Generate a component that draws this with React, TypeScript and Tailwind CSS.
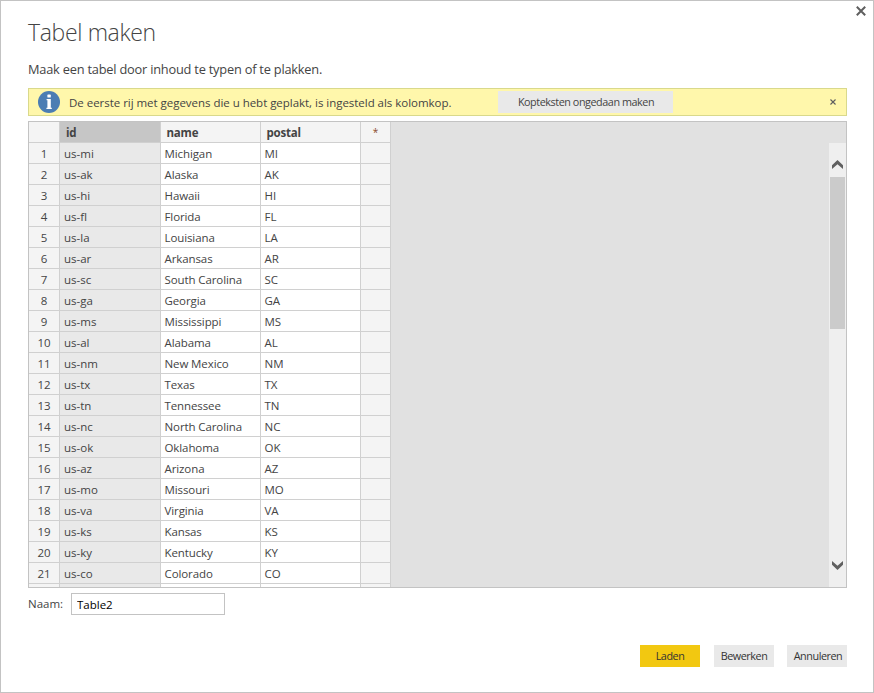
const rows: [string, string, string][] = [
  ['us-mi', 'Michigan', 'MI'],
  ['us-ak', 'Alaska', 'AK'],
  ['us-hi', 'Hawaii', 'HI'],
  ['us-fl', 'Florida', 'FL'],
  ['us-la', 'Louisiana', 'LA'],
  ['us-ar', 'Arkansas', 'AR'],
  ['us-sc', 'South Carolina', 'SC'],
  ['us-ga', 'Georgia', 'GA'],
  ['us-ms', 'Mississippi', 'MS'],
  ['us-al', 'Alabama', 'AL'],
  ['us-nm', 'New Mexico', 'NM'],
  ['us-tx', 'Texas', 'TX'],
  ['us-tn', 'Tennessee', 'TN'],
  ['us-nc', 'North Carolina', 'NC'],
  ['us-ok', 'Oklahoma', 'OK'],
  ['us-az', 'Arizona', 'AZ'],
  ['us-mo', 'Missouri', 'MO'],
  ['us-va', 'Virginia', 'VA'],
  ['us-ks', 'Kansas', 'KS'],
  ['us-ky', 'Kentucky', 'KY'],
  ['us-co', 'Colorado', 'CO'],
];

const gridRow = 'grid h-[21px] shrink-0 grid-cols-[31px_101px_100px_100px_30px] grid-rows-[21px] leading-[21px]';
const cell = 'h-[21px] border-r border-b border-[#d0d0d0] whitespace-nowrap';

function Cross({ size, width }: { size: number; width: number }) {
  return (
    <svg width={size} height={size} viewBox="0 0 10 10" className="block" fill="none" stroke="#5f5f5f" strokeWidth={width}>
      <path d="M.8.8 9.2 9.2M9.2.8.8 9.2" />
    </svg>
  );
}

function Chevron({ down = false }: { down?: boolean }) {
  return (
    <svg width="11" height="9" viewBox="0 0 11 9" className={down ? 'block rotate-180' : 'block'} fill="#606060">
      <path d="M5.5 0 11 5.3V9L5.5 4.2 0 9V5.3z" />
    </svg>
  );
}

function Banner() {
  return (
    <div className="flex h-7 items-center border border-[#d9d98c] bg-[#fff7ab] pl-[9px] text-[11.5px] text-[#444]">
      <svg width="22" height="22" viewBox="0 0 22 22" className="shrink-0">
        <circle cx="11" cy="11" r="11" fill="#4b7db3" />
        <rect x="9.4" y="3.6" width="3.4" height="3" rx=".6" fill="#fff" />
        <path d="M8.6 8.1h4.2v8.7h1V18H8.4v-1.2h1V9.3h-.8z" fill="#fff" />
      </svg>
      <span className="ml-[9px] w-[429px] pt-px whitespace-nowrap tracking-[-0.03px]">
        De eerste rij met gegevens die u hebt geplakt, is ingesteld als kolomkop.
      </span>
      <button className="h-[22px] w-[175px] bg-[#e9e9e9] pl-px text-center text-[10.8px] tracking-[-0.44px] whitespace-nowrap">
        Kopteksten ongedaan maken
      </button>
      <button className="mr-[10px] ml-auto" aria-label="Sluiten">
        <Cross size={6} width={1.9} />
      </button>
    </div>
  );
}

function DataGrid() {
  return (
    <div className="mt-[5px] flex h-[467px] overflow-hidden border border-[#c3c3c3] bg-[#e1e1e1] text-[11.5px] text-[#444]">
      <div className="flex w-[362px] shrink-0 flex-col overflow-hidden">
        <div className={`${gridRow} text-[11.5px] font-bold tracking-[-0.2px]`}>
          <div className={`${cell} bg-[#f4f4f4]`} />
          <div className={`${cell} bg-[#c6c6c6] pl-[6px]`}>id</div>
          <div className={`${cell} bg-[#f4f4f4] pl-[5.5px]`}>name</div>
          <div className={`${cell} bg-[#f4f4f4] pl-[5.5px]`}>postal</div>
          <div className={`${cell} bg-[#f4f4f4] text-center text-[10px] font-normal text-[#8b4a2b]`}>*</div>
        </div>
        {rows.map(([id, name, postal], i) => (
          <div key={id} className={gridRow}>
            <div className={`${cell} bg-[#f4f4f4] text-center`}>{i + 1}</div>
            <div className={`${cell} bg-[#e9e9e9] pl-1`}>{id}</div>
            <div className={`${cell} bg-white pl-[3.5px] tracking-[-0.1px]`}>{name}</div>
            <div className={`${cell} bg-white pl-[3.5px]`}>{postal}</div>
            <div className={`${cell} bg-[#f4f4f4]`} />
          </div>
        ))}
        <div className={gridRow}>
          <div className={`${cell} bg-[#f4f4f4]`} />
          <div className={`${cell} bg-[#e9e9e9]`} />
          <div className={`${cell} bg-white`} />
          <div className={`${cell} bg-white`} />
          <div className={`${cell} bg-[#f4f4f4]`} />
        </div>
      </div>
      <div className="mt-[21px] ml-auto flex w-[17px] flex-col items-center bg-[#efefef]">
        <div className="flex h-[34px] items-end pb-[8px]">
          <Chevron />
        </div>
        <div className="h-[152px] w-[15px] bg-[#cbcbcb]" />
        <div className="mt-auto pb-[17px]">
          <Chevron down />
        </div>
      </div>
    </div>
  );
}

export default function App() {
  return (
    <div className="flex h-[693px] w-[874px] flex-col border border-[#c3c3c3] bg-white px-[27px] pr-[26px] font-['Open_Sans','Noto_Sans',sans-serif] text-[#444]">
      <div className="-mr-[20px] flex h-[16px] items-end justify-end pr-[1px] pb-px">
        <button aria-label="Sluiten">
          <Cross size={10} width={2} />
        </button>
      </div>
      <h1 className="h-[34px] text-[23px] leading-[30px] font-light tracking-[-0.35px]">Tabel maken</h1>
      <p className="mt-[7px] h-[30px] text-[12.8px] leading-[22px] tracking-[-0.21px] whitespace-nowrap">
        Maak een tabel door inhoud te typen of te plakken.
      </p>
      <Banner />
      <DataGrid />
      <div className="mt-[5px] flex h-[22px] text-[11.5px]">
        <label htmlFor="naam" className="w-[43px] leading-[22px] whitespace-nowrap">
          Naam:
        </label>
        <input id="naam" defaultValue="Table2" className="h-[22px] w-[154px] border border-[#c3c3c3] bg-white px-[5px] text-black" />
      </div>
      <div className="mt-[30px] flex justify-end text-[10.8px] tracking-[-0.45px] text-[#333]">
        <button className="h-[22px] w-[60px] bg-[#f2c811]">Laden</button>
        <button className="ml-[14px] h-[22px] w-[60px] bg-[#e9e9e9]">Bewerken</button>
        <button className="ml-[13px] h-[22px] w-[60px] bg-[#e9e9e9] pl-[2px]">Annuleren</button>
      </div>
    </div>
  );
}
